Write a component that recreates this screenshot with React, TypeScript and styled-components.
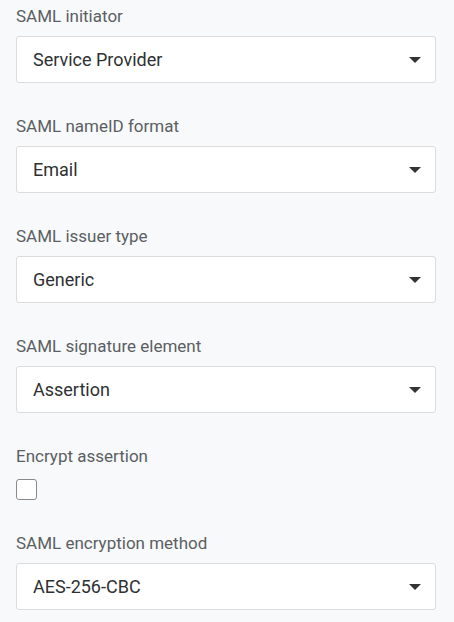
import * as React from 'react';
import styled, { createGlobalStyle } from 'styled-components';

const GlobalStyle = createGlobalStyle`
  html, body {
    margin: 0;
    background: #f8f9fa;
  }
  body {
    font-family: Roboto, "Liberation Sans", sans-serif;
  }
`;

const Form = styled.div`
  display: flex;
  flex-direction: column;
  padding: 6px 18px 0 16px;
`;

const Field = styled.div`
  display: flex;
  flex-direction: column;
  margin-bottom: 33px;
`;

const Label = styled.label<{ $gap?: number }>`
  font-size: 17px;
  line-height: 20px;
  color: #5b5f63;
  margin-bottom: ${p => p.$gap ?? 10}px;
`;

const SelectBox = styled.div`
  height: 47px;
  box-sizing: border-box;
  border: 1px solid #dcdcdc;
  border-radius: 3px;
  background: #fff;
  display: flex;
  align-items: center;
  justify-content: space-between;
  padding: 0 14px 0 16px;
  font-size: 18px;
  color: #2e3133;
`;

const Arrow = styled.span`
  width: 0;
  height: 0;
  border-left: 6.5px solid transparent;
  border-right: 6.5px solid transparent;
  border-top: 6.5px solid #333;
  margin-top: 1px;
`;

const Checkbox = styled.span`
  width: 21px;
  height: 21px;
  box-sizing: border-box;
  border: 1px solid #8a8a8a;
  border-radius: 3px;
  background: #fff;
`;

const Select = ({ label, value }: { label: string; value: string }) => (
  <Field>
    <Label>{label}</Label>
    <SelectBox>
      <span>{value}</span>
      <Arrow />
    </SelectBox>
  </Field>
);

export default function App() {
  return (
    <>
      <GlobalStyle />
      <Form>
        <Select label="SAML initiator" value="Service Provider" />
        <Select label="SAML nameID format" value="Email" />
        <Select label="SAML issuer type" value="Generic" />
        <Select label="SAML signature element" value="Assertion" />
        <Field>
          <Label $gap={13}>Encrypt assertion</Label>
          <Checkbox />
        </Field>
        <Select label="SAML encryption method" value="AES-256-CBC" />
      </Form>
    </>
  );
}
